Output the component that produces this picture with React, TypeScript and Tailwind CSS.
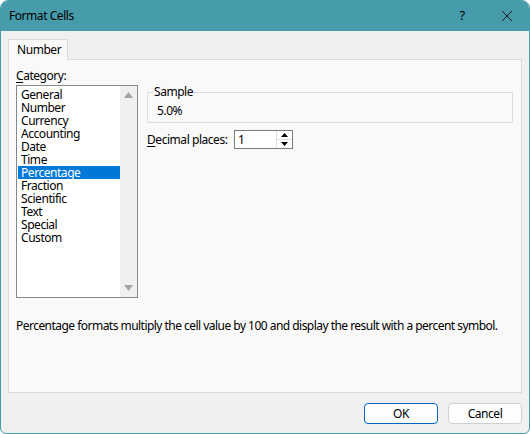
import React from 'react';

const categories = [
  'General',
  'Number',
  'Currency',
  'Accounting',
  'Date',
  'Time',
  'Percentage',
  'Fraction',
  'Scientific',
  'Text',
  'Special',
  'Custom',
];

const font = { fontFamily: '"Noto Sans", "Open Sans", sans-serif' };

const App: React.FC = () => {
  return (
    <div className="w-[530px] h-[434px] bg-white" style={font}>
      <div className="flex flex-col w-[530px] h-[434px] rounded-t-[8px] rounded-b-[6px] border border-[#479cac] bg-[#f0f0f0] overflow-hidden text-[12px] tracking-[-0.45px] text-[#000]">
        {/* Title bar */}
        <div className="flex items-center h-[30px] bg-[#479cac] pl-[8px] shrink-0">
          <span className="text-[12px] leading-none">Format Cells</span>
          <span className="ml-auto mr-[11px] w-[24px] text-center text-[13px]">?</span>
          <div className="w-[44px] flex justify-center">
            <svg width="12" height="12" viewBox="0 0 12 12">
              <path d="M1 1 L11 11 M11 1 L1 11" stroke="#1a1a1a" strokeWidth="1" />
            </svg>
          </div>
        </div>

        {/* Tabs */}
        <div className="flex flex-col pl-[7px] pr-[7px] pt-[8px] shrink-0">
          <div className="flex">
            <div className="relative z-10 -mb-px h-[21px] w-[60px] pl-[8px] flex items-center bg-[#f9f9f9] border border-b-0 border-[#d9d9d9]">
              Number
            </div>
          </div>
          <div className="flex flex-col h-[334px] bg-[#f9f9f9] border border-[#d9d9d9] pl-[7px] pr-[8px] pt-[7px]">
            <div className="flex">
              {/* Category column */}
              <div className="flex flex-col w-[122px]">
                <div className="h-[17px] leading-[17px]">
                  <span className="underline underline-offset-2">C</span>ategory:
                </div>
                <div className="flex mt-[1px] h-[213px] border border-[#828790] bg-white">
                  <div className="flex-1 flex flex-col pt-[2px] pl-[1px]">
                    {categories.map((c) => (
                      <div
                        key={c}
                        className={
                          c === 'Percentage'
                            ? 'h-[13px] leading-[13px] pl-[3px] bg-[#0078d7] text-white'
                            : 'h-[13px] leading-[13px] pl-[3px]'
                        }
                      >
                        {c}
                      </div>
                    ))}
                  </div>
                  <div className="w-[17px] bg-[#f0f0f0] flex flex-col items-center justify-between py-[6px]">
                    <svg width="9" height="6" viewBox="0 0 9 6">
                      <path d="M0 6 L4.5 0 L9 6 Z" fill="#a3a3a3" />
                    </svg>
                    <svg width="9" height="6" viewBox="0 0 9 6">
                      <path d="M0 0 L9 0 L4.5 6 Z" fill="#a3a3a3" />
                    </svg>
                  </div>
                </div>
              </div>

              {/* Right column */}
              <div className="flex flex-col flex-1 ml-[9px] pt-[25px]">
                <div className="relative h-[31px] border border-[#dcdcdc]">
                  <span className="absolute -top-[9px] left-[5px] bg-[#f9f9f9] px-[1px] leading-[16px]">
                    Sample
                  </span>
                  <div className="pl-[9px] pt-[10px] leading-[16px]">5.0%</div>
                </div>
                <div className="flex items-center mt-[7px] h-[19px]">
                  <span className="w-[87px] whitespace-nowrap">
                    <span className="underline underline-offset-2">D</span>ecimal places:
                  </span>
                  <div className="flex h-[19px] w-[59px] border border-[#7a7a7a] bg-white">
                    <div className="flex-1 pl-[3px] leading-[17px]">1</div>
                    <div className="flex flex-col w-[16px] border-l border-[#e0e0e0]">
                      <div className="flex-1 flex items-center justify-center border-b border-[#e0e0e0]">
                        <svg width="7" height="4" viewBox="0 0 7 4">
                          <path d="M0 4 L3.5 0 L7 4 Z" fill="#000" />
                        </svg>
                      </div>
                      <div className="flex-1 flex items-center justify-center">
                        <svg width="7" height="4" viewBox="0 0 7 4">
                          <path d="M0 0 L7 0 L3.5 4 Z" fill="#000" />
                        </svg>
                      </div>
                    </div>
                  </div>
                </div>
              </div>
            </div>

            <div className="mt-[20px] leading-[16px] whitespace-nowrap tracking-[-0.53px]">
              Percentage formats multiply the cell value by 100 and display the result with a percent symbol.
            </div>
          </div>
        </div>

        {/* Buttons */}
        <div className="flex justify-end gap-[10px] pr-[7px] pt-[10px]">
          <button className="w-[74px] h-[21px] rounded-[4px] border border-[#0067c0] bg-[#fdfdfd] text-[12px] leading-none">
            OK
          </button>
          <button className="w-[74px] h-[21px] rounded-[4px] border border-[#d0d0d0] bg-[#fdfdfd] text-[12px] leading-none">
            Cancel
          </button>
        </div>
      </div>
    </div>
  );
};

export default App;
